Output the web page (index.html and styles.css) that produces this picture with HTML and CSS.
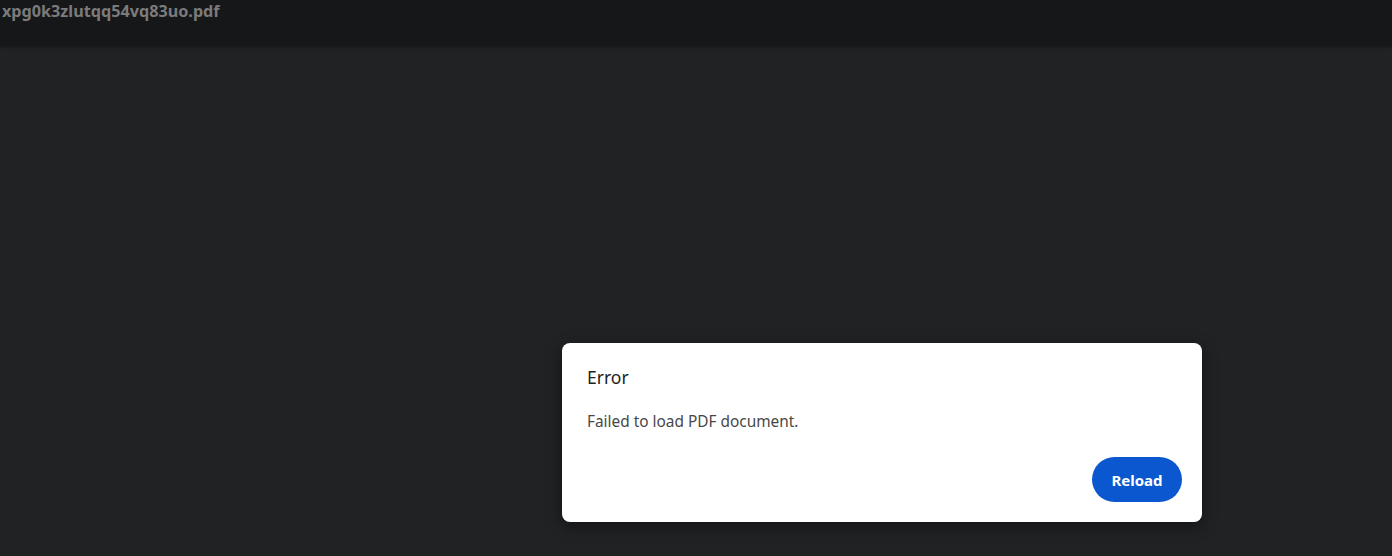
FILE: index.html
```html
<!DOCTYPE html>
<html>
<head>
<meta charset="utf-8">
<link rel="stylesheet" href="styles.css">
</head>
<body>
<header class="toolbar"><span class="title">xpg0k3zlutqq54vq83uo.pdf</span></header>
<main class="viewer"></main>
<div class="dialog" role="dialog">
  <div class="dialog-title">Error</div>
  <div class="dialog-body">Failed to load PDF document.</div>
  <div class="dialog-actions"><button class="reload">Reload</button></div>
</div>
</body>
</html>
```
FILE: styles.css
```css
html, body { margin: 0; height: 100%; }
body {
  background: #212224;
  font-family: "Noto Sans", "Open Sans", sans-serif;
  overflow: hidden;
  display: flex;
  flex-direction: column;
}
.toolbar {
  height: 46px;
  flex: none;
  background: #161719;
  box-shadow: 0 1px 3px rgba(0,0,0,0.35);
  padding-left: 2px;
}
.title {
  display: block;
  color: #7b7b7b;
  font-weight: 700;
  font-size: 16.2px;
  line-height: 24px;
  margin-top: -1px;
}
.viewer { flex: 1; }
.dialog {
  position: absolute;
  left: 562px;
  top: 343px;
  width: 640px;
  height: 179px;
  box-sizing: border-box;
  background: #fff;
  border-radius: 8px;
  box-shadow: 0 4px 16px rgba(0,0,0,0.45);
  padding: 22px 20px 20px 25px;
  display: flex;
  flex-direction: column;
}
.dialog-title {
  color: #1f1f1f;
  font-size: 17.5px;
  line-height: 24px;
}
.dialog-body {
  color: #474747;
  font-size: 15.4px;
  line-height: 20px;
  margin-top: 23px;
}
.dialog-actions {
  margin-top: auto;
  display: flex;
  justify-content: flex-end;
}
.reload {
  width: 90px;
  height: 45px;
  border: none;
  border-radius: 23px;
  background: #0b57d0;
  color: #fff;
  font-family: inherit;
  font-weight: 700;
  font-size: 15px;
  padding: 0;
}
```
